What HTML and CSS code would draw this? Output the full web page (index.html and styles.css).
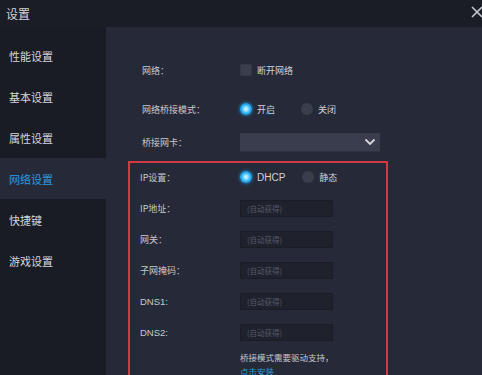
FILE: index.html
```html
<!DOCTYPE html>
<html lang="zh-CN">
<head>
<meta charset="utf-8">
<title>设置</title>
<link rel="stylesheet" href="styles.css">
</head>
<body>
<div class="window">
  <header class="titlebar">
    <span class="title">设置</span>
    <svg class="close" width="14" height="14" viewBox="0 0 14 14"><path d="M2 2 L12 12 M12 2 L2 12" stroke="#c4c6cc" stroke-width="1.6" fill="none"/></svg>
  </header>
  <div class="body">
    <nav class="sidebar">
      <div class="nav-item">性能设置</div>
      <div class="nav-item">基本设置</div>
      <div class="nav-item">属性设置</div>
      <div class="nav-item active">网络设置</div>
      <div class="nav-item">快捷键</div>
      <div class="nav-item">游戏设置</div>
    </nav>
    <main class="main">
      <div class="top">
        <div class="row r1">
          <span class="label">网络：</span>
          <span class="control"><span class="checkbox"></span><span class="opt">断开网络</span></span>
        </div>
        <div class="row r2">
          <span class="label">网络桥接模式：</span>
          <span class="control"><span class="radio on"></span><span class="opt">开启</span><span class="radio"></span><span class="opt">关闭</span></span>
        </div>
        <div class="row r3">
          <span class="label">桥接网卡：</span>
          <span class="control"><span class="select"><svg width="12" height="8" viewBox="0 0 12 8"><path d="M1.5 1.5 L6 6 L10.5 1.5" stroke="#d6d8de" stroke-width="1.8" fill="none"/></svg></span></span>
        </div>
      </div>
      <section class="ipbox">
        <div class="row">
          <span class="label">IP设置：</span>
          <span class="control"><span class="radio on"></span><span class="opt en">DHCP</span><span class="radio"></span><span class="opt">静态</span></span>
        </div>
        <div class="row gap">
          <span class="label">IP地址：</span>
          <span class="control"><span class="input">(自动获得)</span></span>
        </div>
        <div class="row gap">
          <span class="label">网关：</span>
          <span class="control"><span class="input">(自动获得)</span></span>
        </div>
        <div class="row gap">
          <span class="label">子网掩码：</span>
          <span class="control"><span class="input">(自动获得)</span></span>
        </div>
        <div class="row gap">
          <span class="label en">DNS1:</span>
          <span class="control"><span class="input">(自动获得)</span></span>
        </div>
        <div class="row gap">
          <span class="label en">DNS2:</span>
          <span class="control"><span class="input">(自动获得)</span></span>
        </div>
        <div class="note">
          <div>桥接模式需要驱动支持，</div>
          <a class="link">点击安装</a>
        </div>
      </section>
    </main>
  </div>
</div>
</body>
</html>
```

FILE: styles.css
```css
* { box-sizing: border-box; }
html, body {
  margin: 0;
  padding: 0;
  width: 482px;
  height: 375px;
  overflow: hidden;
  background: #262a38;
  font-family: "Noto Sans CJK SC", "Noto Sans", sans-serif;
}
.window {
  width: 482px;
  height: 375px;
  display: flex;
  flex-direction: column;
}
.titlebar {
  height: 27px;
  flex: none;
  background: #1b1d26;
  display: flex;
  align-items: center;
  justify-content: space-between;
  padding-left: 6px;
  padding-right: 0;
}
.title {
  color: #d2d4da;
  font-size: 12px;
}
.close {
  margin-right: -2px;
  margin-top: -3px;
}
.body {
  flex: 1;
  display: flex;
  min-height: 0;
}
.sidebar {
  width: 106px;
  flex: none;
  background: #1a1c25;
  padding-top: 8px;
}
.nav-item {
  height: 41px;
  display: flex;
  align-items: center;
  padding-left: 9px;
  font-size: 11px;
  color: #d4d6dc;
}
.nav-item.active {
  background: #262a38;
  color: #2c9be0;
}
.main {
  flex: 1;
  background: #262a38;
  padding-top: 33px;
  padding-left: 22px;
  min-width: 0;
}
.top {
  padding-left: 14px;
}
.row {
  display: flex;
  align-items: center;
  height: 20px;
}
.r2 { margin-top: 19px; }
.r3 { margin-top: 13px; }
.label {
  width: 98px;
  flex: none;
  font-size: 9px;
  color: #c6c8d0;
}
.ipbox .label { width: 100px; }
.control {
  display: flex;
  align-items: center;
}
.checkbox {
  width: 12px;
  height: 12px;
  background: #3b3e4c;
  border: 1px solid #323543;
  margin-right: 5px;
}
.radio {
  width: 12px;
  height: 12px;
  border-radius: 50%;
  background: #3a3d4b;
  margin-right: 5px;
}
.radio.on {
  background: radial-gradient(circle, #d8f6ff 0, #8fe0ff 25%, #23a9ee 55%, #1a8fd8 100%);
  box-shadow: 0 0 3px 1px rgba(30, 160, 235, 0.55);
}
.opt {
  font-size: 9px;
  color: #d0d2d8;
  margin-right: 26px;
}
.opt.en {
  font-family: "Liberation Sans", Arial, sans-serif;
  font-size: 10px;
  margin-right: 17px;
}
.select {
  width: 140px;
  height: 19px;
  background: #3a3d4d;
  border-bottom: 1px solid #30333f;
  display: flex;
  align-items: center;
  justify-content: flex-end;
  padding-right: 4px;
}
.ipbox {
  margin-top: 9px;
  width: 260px;
  height: 230px;
  border: 2px solid #d03a44;
  border-bottom: none;
  padding: 4px 0 0 10px;
}
.ipbox .row.gap { margin-top: 11px; }
.label.en {
  font-family: "Liberation Sans", Arial, sans-serif;
  font-size: 9.5px;
}
.input {
  width: 93px;
  height: 17px;
  background: #1f222d;
  border: 1px solid #1a1c26;
  font-size: 7.5px;
  color: #555967;
  display: flex;
  align-items: center;
  padding-left: 6px;
}
.note {
  margin-top: 8px;
  padding-left: 100px;
  font-size: 8.5px;
  color: #c6c8d0;
  line-height: 14px;
}
.link {
  color: #2a9fd8;
}
```
